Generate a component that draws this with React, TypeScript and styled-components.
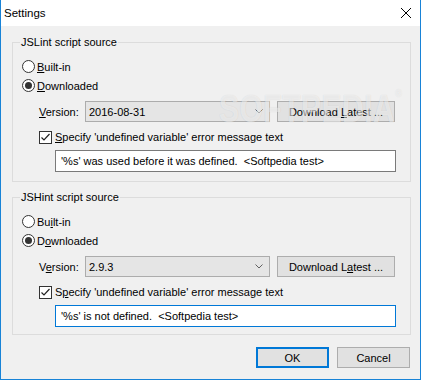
import React from 'react'
import styled, { createGlobalStyle } from 'styled-components'

const GlobalStyle = createGlobalStyle`
	html, body {
		margin: 0;
		padding: 0;
		background: #ffffff;
	}
	body {
		font-family: 'Liberation Sans', Arial, sans-serif;
		font-size: 11px;
		color: #000000;
	}
`

const sources = [
	{
		title: 'JSLint script source',
		keys: { builtIn: 0, downloaded: 0, version: 0, specify: 0, latest: 9 },
		version: '2016-08-31',
		message: "'%s' was used before it was defined.  <Softpedia test>",
		focused: false,
		bottom: 9,
	},
	{
		title: 'JSHint script source',
		keys: { builtIn: 2, downloaded: 1, version: 1, specify: 1, latest: 10 },
		version: '2.9.3',
		message: "'%s' is not defined.  <Softpedia test>",
		focused: true,
		bottom: 7,
	},
]

// underline the access key letter, like a Win32 dialog
const Key = ({ text, at }: { text: string; at: number }) => (
	<span>
		{text.slice(0, at)}
		<u>{text[at]}</u>
		{text.slice(at + 1)}
	</span>
)

function SourceGroup({ source }) {
	const { keys } = source

	return (
		<Group $bottom={source.bottom}>
			<Caption>{source.title}</Caption>
			<RadioRow>
				<Radio />
				<Key text='Built-in' at={keys.builtIn} />
			</RadioRow>
			<RadioRow>
				<Radio $checked />
				<Key text='Downloaded' at={keys.downloaded} />
			</RadioRow>
			<VersionRow>
				<VersionLabel>
					<Key text='Version:' at={keys.version} />
				</VersionLabel>
				<Combo>
					<span>{source.version}</span>
					<svg width='8' height='5' viewBox='0 0 8 5'>
						<path
							d='M0.5 0.5 L4 4 L7.5 0.5'
							fill='none'
							stroke='#606060'
							strokeWidth='1'
						/>
					</svg>
				</Combo>
				<LatestButton>
					<Key text='Download Latest ...' at={keys.latest} />
				</LatestButton>
			</VersionRow>
			<CheckRow>
				<CheckBox>
					<svg width='11' height='11' viewBox='0 0 11 11'>
						<path
							d='M1.5 5.5 L4 8 L9.5 2'
							fill='none'
							stroke='#222'
							strokeWidth='1.2'
						/>
					</svg>
				</CheckBox>
				<Key
					text="Specify 'undefined variable' error message text"
					at={keys.specify}
				/>
			</CheckRow>
			<MessageInput $focused={source.focused}>{source.message}</MessageInput>
		</Group>
	)
}

export default function App() {
	return (
		<>
			<GlobalStyle />
			<Dialog>
				<TitleBar>
					<TitleText>Settings</TitleText>
					<svg width='12' height='12' viewBox='0 0 12 12'>
						<path
							d='M1 1 L11 11 M11 1 L1 11'
							stroke='#000'
							strokeWidth='1'
						/>
					</svg>
				</TitleBar>
				<Body>
					{sources.map((source) => (
						<SourceGroup key={source.title} source={source} />
					))}
					<ButtonBar>
						<DialogButton $default>OK</DialogButton>
						<DialogButton>Cancel</DialogButton>
					</ButtonBar>
				</Body>
				<Watermark>
					SOFTPEDIA<sup>®</sup>
				</Watermark>
			</Dialog>
		</>
	)
}

const Dialog = styled.div`
	position: relative;
	width: 421px;
	height: 380px;
	box-sizing: border-box;
	display: flex;
	flex-direction: column;
	border: 1px solid #1883d7;
	border-top: none;
	background: #f0f0f0;
	overflow: hidden;
`

const TitleBar = styled.div`
	height: 26px;
	flex-shrink: 0;
	display: flex;
	align-items: center;
	justify-content: space-between;
	padding: 0 8px 0 3px;
	background: #ffffff;
`

const TitleText = styled.span`
	font-size: 11.5px;
`

const Body = styled.div`
	display: flex;
	flex-direction: column;
	padding: 8px 9px 0 11px;
`

const Group = styled.fieldset<{ $bottom: number }>`
	margin: 0 0 7px 0;
	padding: 7px 0 ${(p) => p.$bottom}px 9px;
	border: 1px solid #dcdcdc;
	display: flex;
	flex-direction: column;
`

const Caption = styled.legend`
	margin-left: -2px;
	padding: 0 1px;
	line-height: 16px;
`

const RadioRow = styled.div`
	height: 19px;
	display: flex;
	align-items: center;
	gap: 2px;
`

const Radio = styled.span<{ $checked?: boolean }>`
	width: 13px;
	height: 13px;
	box-sizing: border-box;
	border: 1px solid #333333;
	border-radius: 50%;
	background: #ffffff;
	display: flex;
	align-items: center;
	justify-content: center;

	&::after {
		content: '';
		width: 7px;
		height: 7px;
		border-radius: 50%;
		background: ${(p) => (p.$checked ? '#333333' : 'transparent')};
	}
`

const VersionRow = styled.div`
	display: flex;
	align-items: center;
	margin-top: 6px;
	padding-left: 17px;
`

const VersionLabel = styled.span`
	width: 46px;
`

const Combo = styled.div`
	width: 185px;
	height: 21px;
	box-sizing: border-box;
	display: flex;
	align-items: center;
	justify-content: space-between;
	padding: 0 6px 0 3px;
	border: 1px solid #acacac;
	background: #e5e5e5;
`

const LatestButton = styled.div`
	width: 118px;
	height: 21px;
	box-sizing: border-box;
	margin-left: 7px;
	display: flex;
	align-items: center;
	justify-content: center;
	border: 1px solid #adadad;
	background: #e1e1e1;
`

const CheckRow = styled.div`
	height: 20px;
	margin-top: 5px;
	padding-left: 17px;
	display: flex;
	align-items: center;
	gap: 3px;
`

const CheckBox = styled.span`
	width: 13px;
	height: 13px;
	box-sizing: border-box;
	border: 1px solid #333333;
	background: #ffffff;
	display: flex;
	align-items: center;
	justify-content: center;
`

const MessageInput = styled.div<{ $focused?: boolean }>`
	width: 341px;
	height: 22px;
	box-sizing: border-box;
	margin: 3px 0 0 33px;
	padding-left: 5px;
	display: flex;
	align-items: center;
	white-space: pre;
	background: #ffffff;
	border: 1px solid ${(p) => (p.$focused ? '#0078d7' : '#7a7a7a')};
`

const ButtonBar = styled.div`
	display: flex;
	justify-content: flex-end;
	gap: 8px;
	margin-top: 5px;
	padding-right: 1px;
`

const DialogButton = styled.div<{ $default?: boolean }>`
	width: 73px;
	height: 21px;
	box-sizing: border-box;
	display: flex;
	align-items: center;
	justify-content: center;
	background: #e1e1e1;
	border: ${(p) => (p.$default ? '2px solid #0078d7' : '1px solid #adadad')};
`

const Watermark = styled.div`
	position: absolute;
	left: 218px;
	top: 92px;
	font-size: 30px;
	font-weight: bold;
	letter-spacing: 0.5px;
	color: rgba(255, 255, 255, 0.55);
	text-shadow: 0 0 1px rgba(0, 0, 0, 0.12);
	transform: scaleY(1.3);
	pointer-events: none;

	sup {
		font-size: 9px;
		font-weight: normal;
		vertical-align: top;
	}
`
